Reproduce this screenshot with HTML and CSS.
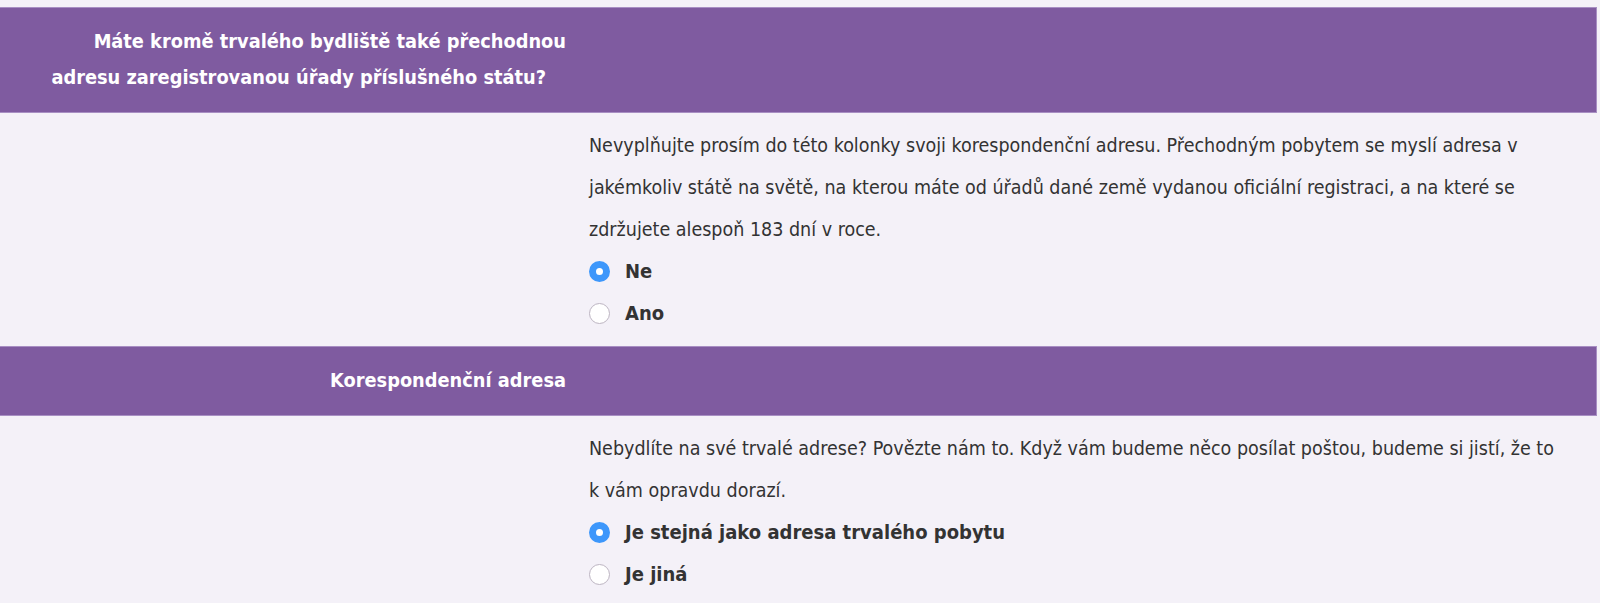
FILE: index.html
```html
<!DOCTYPE html>
<html lang="cs">
<head>
<meta charset="utf-8">
<title>Formulář</title>
<link rel="stylesheet" href="styles.css">
</head>
<body>
<div class="form">
  <div class="row head">
    <div class="label">Máte kromě trvalého bydliště také přechodnou adresu zaregistrovanou úřady příslušného státu?<span class="tail"></span></div>
    <div class="fill"></div>
  </div>
  <div class="row body">
    <div class="label"></div>
    <div class="content">
      <p class="hint">Nevyplňujte prosím do této kolonky svoji korespondenční adresu. Přechodným pobytem se myslí adresa v jakémkoliv státě na světě, na kterou máte od úřadů dané země vydanou oficiální registraci, a na které se zdržujete alespoň 183 dní v roce.</p>
      <label class="opt"><span class="radio checked"></span><span class="opt-text">Ne</span></label>
      <label class="opt"><span class="radio"></span><span class="opt-text">Ano</span></label>
    </div>
  </div>
  <div class="row head">
    <div class="label">Korespondenční adresa</div>
    <div class="fill"></div>
  </div>
  <div class="row body">
    <div class="label"></div>
    <div class="content">
      <p class="hint">Nebydlíte na své trvalé adrese? Povězte nám to. Když vám budeme něco posílat poštou, budeme si jistí, že to k vám opravdu dorazí.</p>
      <label class="opt"><span class="radio checked"></span><span class="opt-text">Je stejná jako adresa trvalého pobytu</span></label>
      <label class="opt"><span class="radio"></span><span class="opt-text">Je jiná</span></label>
    </div>
  </div>
</div>
</body>
</html>
```

FILE: styles.css
```css
html, body {
  margin: 0;
  padding: 0;
  background: #f4f1f8;
}
body {
  padding-top: 7px;
  font-family: "DejaVu Sans Condensed", "DejaVu Sans", sans-serif;
  color: #333;
}
.form {
  width: 1597px;
}
.row {
  display: grid;
  grid-template-columns: 577px 1fr;
}
.head {
  background: #7f5ba0;
  border: 1px solid #a88fc3;
  border-left: 0;
}
.head .label {
  color: #fff;
  font-weight: bold;
  font-size: 19.8px;
  line-height: 36px;
  text-align: right;
  padding: 16px 11px 16px 36px;
}
.tail {
  display: inline-block;
  width: 20px;
}
.body .content {
  padding: 12px 42px 12px 12px;
}
.hint {
  margin: 0;
  font-size: 19.5px;
  line-height: 41.8px;
}
.opt {
  display: flex;
  align-items: center;
  height: 41.8px;
}
.radio {
  width: 21px;
  height: 21px;
  box-sizing: border-box;
  border-radius: 50%;
  background: #fff;
  border: 1px solid #bdb5c2;
  margin-right: 15px;
  flex: none;
}
.radio.checked {
  border: 7px solid #3d97fb;
  background: #fff;
}
.opt-text {
  font-weight: bold;
  font-size: 20px;
}
```
